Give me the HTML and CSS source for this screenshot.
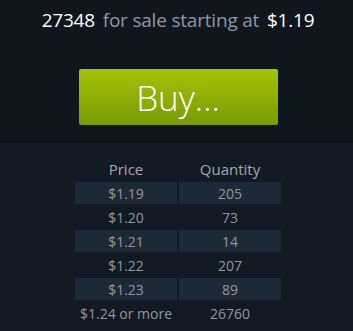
FILE: index.html
```html
<!DOCTYPE html>
<html lang="en">
<head>
    <meta charset="UTF-8">
    <meta name="viewport" content="width=device-width, initial-scale=1.0">
    <title>Buy Orders</title>
    <link rel="stylesheet" href="styles.css">
</head>
<body>
    <div class="summary">
        <div class="headline">
            <span class="count">27348</span> for sale starting at <span class="price">$1.19</span>
        </div>
        <button class="buy-btn">Buy...</button>
    </div>

    <div class="orders">
        <table class="orders-table">
            <thead>
                <tr>
                    <th>Price</th>
                    <th>Quantity</th>
                </tr>
            </thead>
            <tbody>
                <tr class="shaded"><td>$1.19</td><td>205</td></tr>
                <tr><td>$1.20</td><td>73</td></tr>
                <tr class="shaded"><td>$1.21</td><td>14</td></tr>
                <tr><td>$1.22</td><td>207</td></tr>
                <tr class="shaded"><td>$1.23</td><td>89</td></tr>
                <tr><td>$1.24 or more</td><td>26760</td></tr>
            </tbody>
        </table>
    </div>
</body>
</html>
```

FILE: styles.css
```css
body {
    margin: 0;
    background-color: #10161e;
    font-family: "Open Sans", Arial, sans-serif;
    color: #8f98a0;
}

.summary {
    padding: 10px 0 16px 3px;
    text-align: center;
    border-bottom: 1px solid #06090d;
}

.headline {
    font-size: 19px;
    line-height: 20px;
    letter-spacing: -0.2px;
    color: #8f98a0;
}

.count,
.price {
    color: #ffffff;
}

.count {
    margin-right: 3px;
}

.price {
    margin-left: 3px;
}

.buy-btn {
    display: block;
    margin: 39px auto 0;
    width: 199px;
    height: 56px;
    padding: 0;
    border: none;
    border-radius: 2px;
    background: linear-gradient(to bottom, #a5c307, #799a05);
    color: #ffffff;
    font-family: "Open Sans", Arial, sans-serif;
    font-size: 35px;
    font-weight: 300;
    cursor: pointer;
}

.orders {
    padding: 14px 0 0 3px;
    min-height: 175px;
    background: linear-gradient(to bottom, #121a24, #111923);
}

.orders-table {
    margin: 0 auto;
    border-spacing: 2px;
    font-size: 14px;
}

.orders-table th {
    width: 102px;
    height: 22px;
    padding: 0;
    font-size: 15px;
    font-weight: normal;
    color: #a3aab0;
}

.orders-table td {
    height: 22px;
    padding: 0;
    text-align: center;
}

.shaded td {
    background-color: #1e2937;
}
```
